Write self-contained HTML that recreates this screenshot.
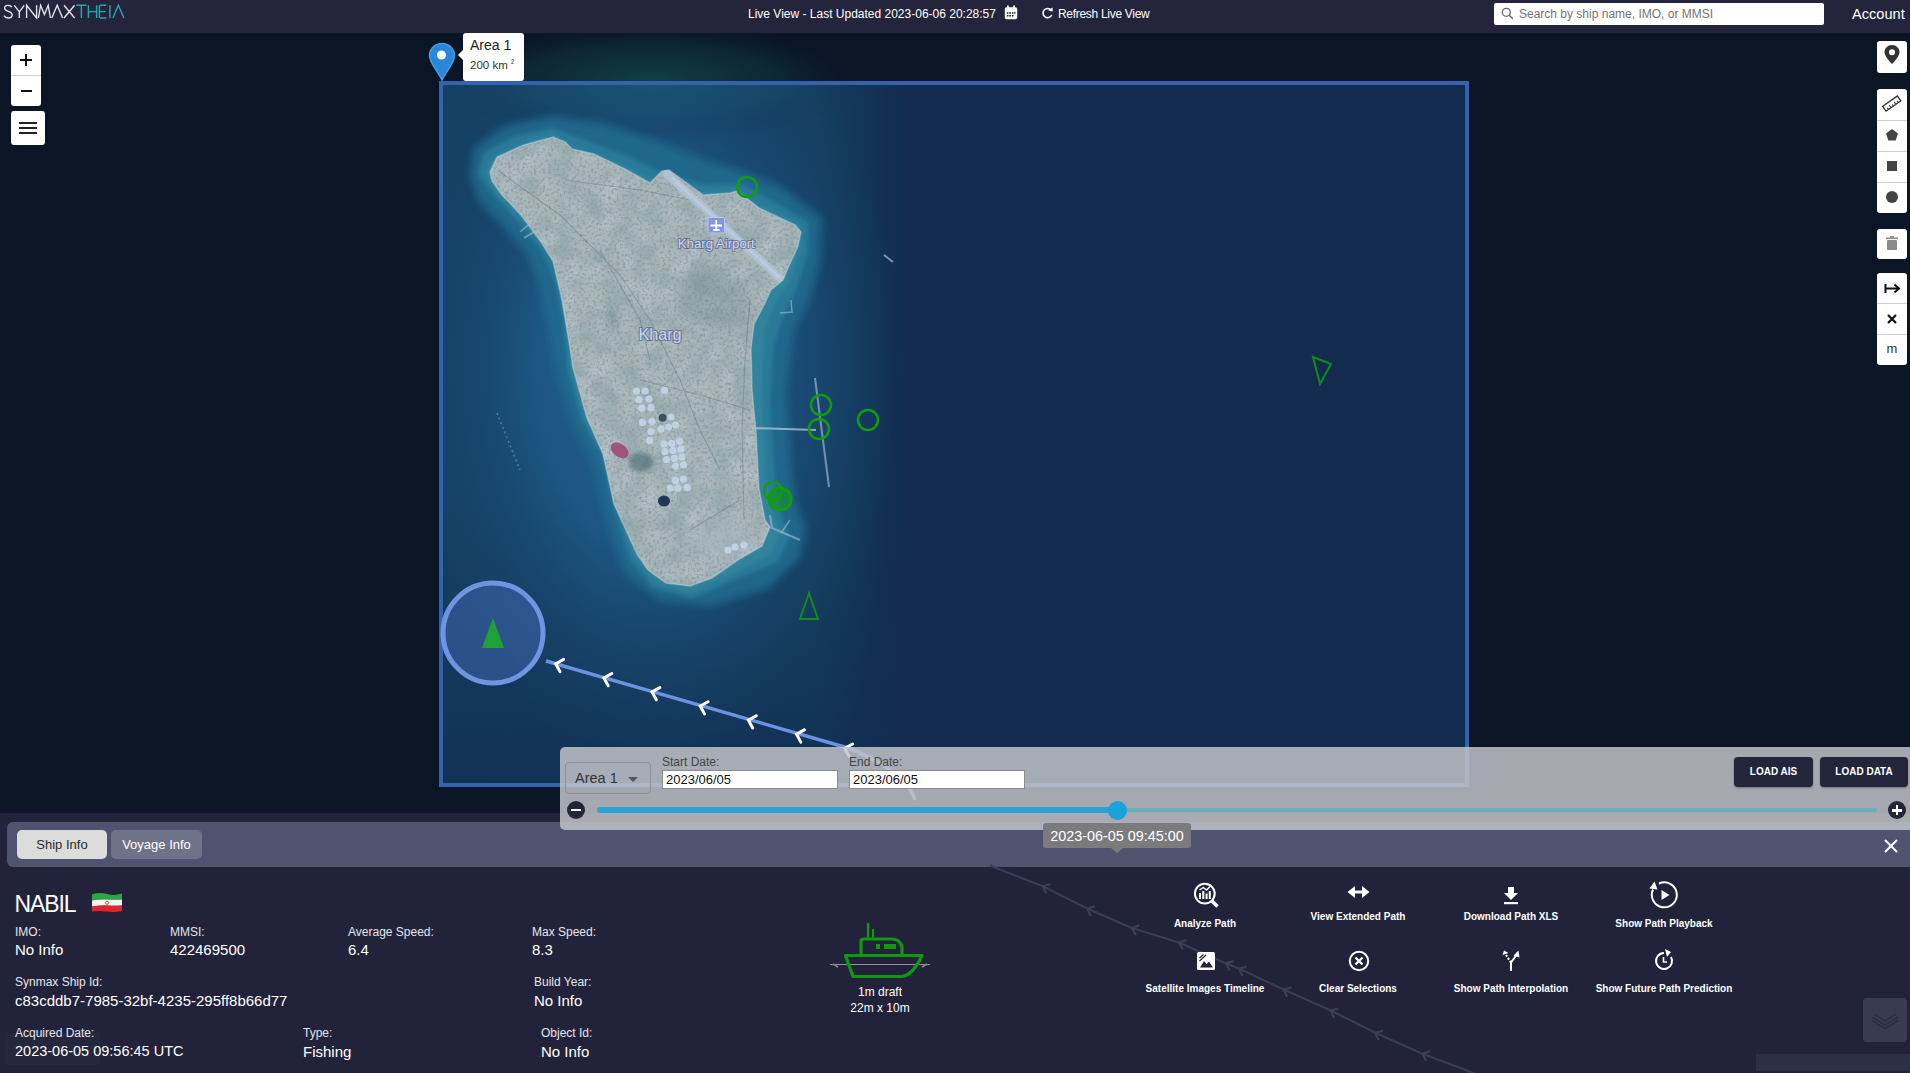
<!DOCTYPE html>
<html><head><meta charset="utf-8">
<style>
*{box-sizing:border-box;margin:0;padding:0}
html,body{width:1910px;height:1073px;overflow:hidden;background:#0a1526;font-family:"Liberation Sans",sans-serif;position:relative}
.abs{position:absolute}
#nav{left:0;top:0;width:1910px;height:33px;background:#24253c}
#map{left:0;top:32px;width:1910px;height:790px;background:#0a1526;overflow:hidden}
.wbtn{position:absolute;background:#fff;border-radius:3px}
#timeline{left:560px;top:747px;width:1350px;height:83px;background:rgba(196,197,201,0.84);border-radius:5px 0 0 5px}
#bottom{left:0;top:813px;width:1910px;height:260px;background:#22233a}
#tabbar{left:7px;top:9px;width:1903px;height:45px;background:#4f5370;border-radius:6px 0 0 6px}
.tab{position:absolute;top:8px;height:29px;border-radius:5px;font-size:13px;text-align:center;line-height:29px}
.lbl{position:absolute;color:#e6e6ea;font-size:12px;white-space:nowrap}
.val{position:absolute;color:#fff;font-size:15px;white-space:nowrap}
.act{position:absolute;color:#fff;font-size:10px;font-weight:bold;white-space:nowrap;text-align:center;width:200px}
</style></head>
<body>
<svg class="abs" style="left:0;top:0" width="1910" height="1073" viewBox="0 0 1910 1073">
 <defs>
  <radialGradient id="glow" gradientUnits="userSpaceOnUse" cx="655" cy="360" r="340">
   <stop offset="0" stop-color="#1c5870"/>
   <stop offset="0.45" stop-color="#184c66"/>
   <stop offset="0.65" stop-color="#113650"/>
   <stop offset="0.82" stop-color="#0c2238"/>
   <stop offset="1" stop-color="#0a1526" stop-opacity="0"/>
  </radialGradient>
  <linearGradient id="topband" x1="0" y1="0" x2="1" y2="0">
   <stop offset="0" stop-color="#14485a" stop-opacity="0"/>
   <stop offset="0.2" stop-color="#14485a" stop-opacity="0.7"/>
   <stop offset="0.75" stop-color="#10384c" stop-opacity="0.5"/>
   <stop offset="1" stop-color="#0a1526" stop-opacity="0"/>
  </linearGradient>
  <filter id="b8" x="-30%" y="-30%" width="160%" height="160%"><feGaussianBlur stdDeviation="8"/></filter>
  <filter id="b4" x="-30%" y="-30%" width="160%" height="160%"><feGaussianBlur stdDeviation="4"/></filter>
  <filter id="b2" x="-30%" y="-30%" width="160%" height="160%"><feGaussianBlur stdDeviation="2"/></filter>
  <filter id="b20" x="-50%" y="-50%" width="200%" height="200%"><feGaussianBlur stdDeviation="20"/></filter>
  <filter id="texd" x="0" y="0" width="100%" height="100%">
   <feTurbulence type="fractalNoise" baseFrequency="0.35" numOctaves="2" seed="7" result="n"/>
   <feColorMatrix in="n" type="matrix" values="0 0 0 0 0.36  0 0 0 0 0.36  0 0 0 0 0.28  0 0 0 -3.0 1.6"/>
  </filter>
  <filter id="texl" x="0" y="0" width="100%" height="100%">
   <feTurbulence type="fractalNoise" baseFrequency="0.05" numOctaves="2" seed="11" result="n"/>
   <feColorMatrix in="n" type="matrix" values="0 0 0 0 0.90  0 0 0 0 0.88  0 0 0 0 0.82  0 0 0 2.2 -1.0"/>
  </filter>
  <filter id="texm" x="0" y="0" width="100%" height="100%">
   <feTurbulence type="fractalNoise" baseFrequency="0.045" numOctaves="3" seed="5" result="n"/>
   <feColorMatrix in="n" type="matrix" values="0 0 0 0 0.38  0 0 0 0 0.42  0 0 0 0 0.30  2.6 0 0 0 -1.05"/>
  </filter>
  <clipPath id="isl"><path d="M490,172 L497,157 L524,145 L553,137 L565,142 L572,149 L594,154 L625,169 L650,183 L662,171 L669,170 L703,195 L730,193 L737,191 L759,208 L795,225 L801,232 L798,246 L788,268 L783,280 L771,290 L764,305 L754,324 L751,348 L752,390 L756,432 L759,489 L765,520 L770,527 L762,546 L738,560 L712,578 L690,586 L666,583 L648,570 L637,554 L614,504 L603,454 L587,418 L573,368 L570,348 L562,300 L553,261 L541,242 L521,215 L502,195 L492,181 Z"/></clipPath>
  <clipPath id="below"><rect x="441" y="83" width="1469" height="990"/></clipPath>
  <clipPath id="sat"><rect x="441" y="32" width="1469" height="1041"/></clipPath>
 </defs>
 <g clip-path="url(#sat)">
  <linearGradient id="tileg" x1="0" y1="0" x2="1" y2="0"><stop offset="0" stop-color="#0e3444" stop-opacity="0.9"/><stop offset="0.8" stop-color="#0e3242" stop-opacity="0.85"/><stop offset="1" stop-color="#0e3242" stop-opacity="0"/></linearGradient>
  <linearGradient id="tilev" x1="0" y1="0" x2="0" y2="1"><stop offset="0" stop-color="#0a1526" stop-opacity="0"/><stop offset="0.6" stop-color="#0a1526" stop-opacity="0"/><stop offset="1" stop-color="#0a1526" stop-opacity="0.7"/></linearGradient>
  <rect x="441" y="83" width="470" height="702" fill="url(#tileg)"/>
  <rect x="441" y="83" width="470" height="702" fill="url(#tilev)"/>
  <radialGradient id="glow2" cx="0.5" cy="0.5" r="0.5">
   <stop offset="0" stop-color="#1c5870"/>
   <stop offset="0.45" stop-color="#184c66"/>
   <stop offset="0.7" stop-color="#12384e" stop-opacity="0.8"/>
   <stop offset="1" stop-color="#0e3242" stop-opacity="0"/>
  </radialGradient>
  <ellipse cx="650" cy="365" rx="250" ry="400" fill="url(#glow2)" clip-path="url(#below)"/>
  <radialGradient id="topg" cx="0.5" cy="0.5" r="0.5"><stop offset="0" stop-color="#155058" stop-opacity="0.7"/><stop offset="0.6" stop-color="#12404c" stop-opacity="0.4"/><stop offset="1" stop-color="#0a1526" stop-opacity="0"/></radialGradient>
  <ellipse cx="650" cy="80" rx="220" ry="60" fill="url(#topg)"/>
  <!-- shallow water halo -->
  <path filter="url(#b4)" fill="#1d6474" opacity="0.9" d="M470,175 L474,148 L505,126 L550,116 L600,122 L655,140 L705,160 L745,172 L780,186 L822,218 L820,262 L810,300 L794,330 L786,390 L790,450 L795,500 L806,528 L800,558 L768,588 L710,606 L658,600 L624,572 L606,520 L592,462 L572,424 L556,372 L548,330 L540,287 L528,255 L504,228 L478,200 Z"/>
  <path filter="url(#b2)" fill="#2a7c84" opacity="0.85" d="M478,174 L484,153 L515,136 L553,128 L585,140 L630,157 L660,172 L702,184 L742,184 L768,198 L808,222 L808,252 L796,290 L784,315 L774,345 L770,400 L775,480 L782,518 L790,536 L778,562 L730,582 L692,598 L652,587 L630,560 L614,508 L602,457 L582,421 L568,372 L563,320 L553,275 L541,250 L518,222 L494,196 Z"/>
  <path filter="url(#b2)" fill="#3a8c8a" opacity="0.55" d="M486,173 L494,157 L522,143 L553,134 L572,147 L626,166 L652,180 L704,192 L736,190 L760,205 L800,225 L800,250 L790,280 L776,300 L764,330 L762,400 L766,480 L774,520 L780,534 L770,555 L728,576 L690,592 L656,582 L634,556 L618,505 L606,455 L585,419 L571,370 L566,320 L556,265 L543,245 L521,218 L498,194 Z"/>
  <!-- island -->
  <g clip-path="url(#isl)">
   <rect x="480" y="130" width="330" height="470" fill="#c6c2aa"/>
   <rect x="480" y="130" width="330" height="470" filter="url(#texl)" opacity="0.35"/>
   <rect x="480" y="130" width="330" height="470" filter="url(#texm)" opacity="0.75"/>
   <rect x="480" y="130" width="330" height="470" filter="url(#texd)"/>
   <ellipse cx="715" cy="300" rx="35" ry="30" fill="#6f7c74" opacity="0.3" filter="url(#b8)"/>
   <ellipse cx="612" cy="320" rx="6" ry="12" fill="#5c6a62" opacity="0.4" filter="url(#b4)"/>
   <ellipse cx="641" cy="462" rx="12" ry="10" fill="#4f5e54" opacity="0.6" filter="url(#b2)"/>
   <ellipse cx="720" cy="540" rx="30" ry="20" fill="#c0c0b4" opacity="0.5" filter="url(#b8)"/>
   <!-- roads -->
   <g stroke="#5a6058" stroke-width="1.1" fill="none" opacity="0.35">
    <path d="M497,170 L560,215 L620,275 L650,320 L680,380 L700,430 L720,470"/>
    <path d="M565,180 L640,190 L690,200 L720,225"/>
    <path d="M600,250 L640,320 L650,360"/>
    <path d="M750,300 L745,360 L742,430 L744,520"/>
    <path d="M640,380 L700,395 L750,410"/>
    <path d="M690,530 L740,500"/>
   </g>
   <!-- runway -->
   <path d="M667,174 L783,281" stroke="#cfd3cf" stroke-width="8" stroke-linecap="round" opacity="0.85"/>
   <path d="M672,178 L780,278" stroke="#e0e2de" stroke-width="3" opacity="0.6"/>
   <!-- ponds -->
   <ellipse cx="619.6" cy="450.4" rx="10" ry="6.5" fill="#b8485e" transform="rotate(35 619.6 450.4)"/>
   <ellipse cx="664" cy="501" rx="6" ry="5.5" fill="#1c2430"/>
   <circle cx="662.6" cy="417.8" r="4" fill="#3c4640"/>
  </g>
  <path d="M490,172 L497,157 L524,145 L553,137 L565,142 L572,149 L594,154 L625,169 L650,183 L662,171 L669,170 L703,195 L730,193 L737,191 L759,208 L795,225 L801,232 L798,246 L788,268 L783,280 L771,290 L764,305 L754,324 L751,348 L752,390 L756,432 L759,489 L765,520 L770,527 L762,546 L738,560 L712,578 L690,586 L666,583 L648,570 L637,554 L614,504 L603,454 L587,418 L573,368 L570,348 L562,300 L553,261 L541,242 L521,215 L502,195 L492,181 Z" fill="none" stroke="#dfe2d8" stroke-width="1.6" opacity="0.45"/>
  <g fill="#e6eaea" opacity="0.85"><circle cx="636.5" cy="391" r="3.6"/><circle cx="645" cy="391" r="3.6"/><circle cx="639" cy="399.6" r="3.6"/><circle cx="649" cy="399" r="3.6"/><circle cx="641.7" cy="408" r="3.6"/><circle cx="651" cy="407.4" r="3.6"/><circle cx="642.4" cy="422.4" r="3.6"/><circle cx="652" cy="421.7" r="3.6"/><circle cx="671" cy="417" r="3.6"/><circle cx="651" cy="431.5" r="3.6"/><circle cx="661" cy="429" r="3.6"/><circle cx="668.5" cy="427" r="3.6"/><circle cx="675.6" cy="425" r="3.6"/><circle cx="649.6" cy="440.6" r="3.6"/><circle cx="664" cy="444" r="3.6"/><circle cx="671.7" cy="443.3" r="3.6"/><circle cx="679.6" cy="441.3" r="3.6"/><circle cx="665" cy="451.7" r="3.6"/><circle cx="673" cy="450.4" r="3.6"/><circle cx="681" cy="449" r="3.6"/><circle cx="666.5" cy="459.6" r="3.6"/><circle cx="674.3" cy="458.3" r="3.6"/><circle cx="682" cy="457" r="3.6"/><circle cx="675.6" cy="466" r="3.6"/><circle cx="683.5" cy="464.8" r="3.6"/><circle cx="675.6" cy="480.4" r="3.6"/><circle cx="683.5" cy="479" r="3.6"/><circle cx="670.4" cy="488" r="3.6"/><circle cx="678" cy="488" r="3.6"/><circle cx="687.4" cy="487.6" r="3.6"/><circle cx="664.6" cy="390.4" r="3.6"/><circle cx="735" cy="547" r="3.6"/><circle cx="744" cy="545" r="3.6"/><circle cx="728" cy="550" r="3.6"/></g>
  <!-- jetties -->
  <path d="M752,428 L816,430" stroke="#c8cccc" stroke-width="2" opacity="0.8"/>
  <path d="M815,378 L829,487" stroke="#aab4ba" stroke-width="2" opacity="0.75"/>
  <path d="M770,515 L772,528 L800,540" stroke="#c0c8d0" stroke-width="2" fill="none" opacity="0.6"/>
  <path d="M781,533 L790,520" stroke="#c0c8d0" stroke-width="1.5" opacity="0.6"/>
  <path d="M497,413 L520,470" stroke="#8aa0b0" stroke-width="1.5" stroke-dasharray="2 3" opacity="0.6"/>
  <path d="M884,255 L893,262" stroke="#c0c8d0" stroke-width="2" opacity="0.7"/>
  <path d="M520,232 L532,222 M524,238 L534,232" stroke="#c8d0d0" stroke-width="1.5" opacity="0.6"/>
  <path d="M780,313 L792,312 L791,300" stroke="#c8d0d0" stroke-width="1.5" fill="none" opacity="0.6"/>
 </g>
 <!-- area overlay -->
 <rect x="441" y="83" width="1026" height="702" fill="#3388ff" fill-opacity="0.19" stroke="#3562ae" stroke-width="4"/>
 <!-- labels -->
 <rect x="708" y="217.5" width="16.5" height="15.5" rx="1.5" fill="#8497dc" stroke="#b9c6ee" stroke-width="1"/>
 <path d="M716.2,220 L716.2,231 M710.5,225.5 L722,225.5 M713,229.8 L719.5,229.8" stroke="#fff" stroke-width="1.8"/>
 <g font-family="Liberation Sans" fill="#c9d3f2" stroke="#44507a" stroke-width="2.2" paint-order="stroke" stroke-opacity="0.55">
  <text x="716.3" y="247.8" font-size="13.2" text-anchor="middle">Kharg Airport</text>
  <text x="660" y="339.5" font-size="16.2" text-anchor="middle">Kharg</text>
 </g>
 <!-- green vessel markers -->
 <g fill="none" stroke="#139a13" stroke-width="2.6">
  <circle cx="747" cy="187" r="10"/>
  <circle cx="821" cy="405" r="10"/>
  <circle cx="819" cy="429" r="10"/>
  <circle cx="868" cy="420" r="10"/>
  <circle cx="773" cy="491" r="9"/>
 </g>
 <circle cx="780" cy="499" r="11" fill="#139a13" fill-opacity="0.55" stroke="#139a13" stroke-width="3.2"/>
 <path d="M809,593 L800,619 L818,619 Z" fill="none" stroke="#138a1c" stroke-width="2"/>
 <path d="M1313,357 L1331,364 L1320,384 Z" fill="none" stroke="#138a1c" stroke-width="2"/>
 <!-- selected vessel -->
 <circle cx="493" cy="633" r="50" fill="#4a6fc0" fill-opacity="0.45" stroke="#6f95e0" stroke-width="5"/>
 <path d="M493,618 L482,648 L504,648 Z" fill="#21a035"/>
 <!-- path -->
 <path d="M546,661 L848,748 Q905,770 915,800" stroke="#6b93e0" stroke-width="3.5" fill="none"/>
 <g stroke="#fff" stroke-width="3" fill="none" stroke-linecap="round">
<path d="M560.0,671.6 L555.7,663.8 L563.6,659.4"/>
<path d="M608.2,685.7 L603.9,677.9 L611.8,673.5"/>
<path d="M656.3,699.8 L652.0,691.9 L659.9,687.6"/>
<path d="M704.5,713.9 L700.2,706.0 L708.1,701.7"/>
<path d="M752.7,728.0 L748.4,720.1 L756.3,715.8"/>
<path d="M800.8,742.1 L796.5,734.2 L804.4,729.9"/>
<path d="M849.0,756.2 L844.7,748.3 L852.6,744.0"/>
 </g>
</svg>



<!-- left zoom controls -->
<div class="wbtn" style="left:11px;top:45px;width:30px;height:61px"></div>
<div class="abs" style="left:11px;top:75px;width:30px;height:1px;background:#cfcfcf"></div>
<div class="abs" style="left:20px;top:59px;width:12px;height:2px;background:#111"></div>
<div class="abs" style="left:25px;top:54px;width:2px;height:12px;background:#111"></div>
<div class="abs" style="left:21px;top:90px;width:11px;height:2px;background:#111"></div>
<div class="wbtn" style="left:11px;top:111px;width:34px;height:34px"></div>
<div class="abs" style="left:19px;top:122px;width:18px;height:2px;background:#222"></div>
<div class="abs" style="left:19px;top:127px;width:18px;height:2px;background:#222"></div>
<div class="abs" style="left:19px;top:132px;width:18px;height:2px;background:#222"></div>
<!-- area marker + tooltip -->
<svg class="abs" style="left:427px;top:42px" width="30" height="40" viewBox="0 0 30 40">
 <path d="M15,1.5 C8,1.5 2.5,7 2.5,13.5 C2.5,21 10,28 15,38 C20,28 27.5,21 27.5,13.5 C27.5,7 22,1.5 15,1.5 Z" fill="#2a87d8" stroke="#4a9ce0" stroke-width="1.5"/>
 <circle cx="14.5" cy="13" r="4.5" fill="#fff"/>
</svg>
<div class="abs" style="left:463px;top:33px;width:61px;height:48px;background:#fff;border-radius:3px"></div>
<div class="abs" style="left:458px;top:49px;width:0;height:0;border-top:6px solid transparent;border-bottom:6px solid transparent;border-right:6px solid #fff"></div>
<div class="abs" style="left:470px;top:37px;font-size:14px;color:#222;white-space:nowrap">Area 1</div>
<div class="abs" style="left:470px;top:58px;font-size:11.5px;color:#333;white-space:nowrap">200 km <span style="font-size:9px;vertical-align:3px">&sup2;</span></div>
<!-- right toolbar -->
<div class="wbtn" style="left:1877px;top:41px;width:30px;height:32px"></div>
<svg class="abs" style="left:1883px;top:44px" width="18" height="22" viewBox="0 0 18 22"><path d="M9,1 C4.6,1 1.5,4.3 1.5,8.3 C1.5,13 9,20 9,20 C9,20 16.5,13 16.5,8.3 C16.5,4.3 13.4,1 9,1 Z" fill="#333"/><circle cx="9" cy="8.3" r="3" fill="#fff"/></svg>
<div class="wbtn" style="left:1877px;top:89px;width:30px;height:124px"></div>
<div class="abs" style="left:1877px;top:120px;width:30px;height:1px;background:#ccc"></div>
<div class="abs" style="left:1877px;top:151px;width:30px;height:1px;background:#ccc"></div>
<div class="abs" style="left:1877px;top:182px;width:30px;height:1px;background:#ccc"></div>
<svg class="abs" style="left:1880px;top:92px" width="24" height="24" viewBox="0 0 24 24"><g transform="rotate(-35 12 12)"><rect x="3" y="8.5" width="18" height="6" fill="none" stroke="#333" stroke-width="1.3"/><path d="M6,14.5 V12.5 M9,14.5 V11.5 M12,14.5 V12.5 M15,14.5 V11.5 M18,14.5 V12.5" stroke="#333" stroke-width="1"/></g></svg>
<svg class="abs" style="left:1885px;top:128px" width="14" height="14" viewBox="0 0 14 14"><path d="M7,1 L13,5.4 L10.7,12.5 L3.3,12.5 L1,5.4 Z" fill="#444"/></svg>
<div class="abs" style="left:1887px;top:161px;width:10px;height:10px;background:#444"></div>
<div class="abs" style="left:1886px;top:191px;width:12px;height:12px;background:#444;border-radius:50%"></div>
<div class="wbtn" style="left:1877px;top:229px;width:30px;height:30px"></div>
<svg class="abs" style="left:1885px;top:235px" width="14" height="16" viewBox="0 0 14 16"><rect x="2" y="5" width="10" height="10" rx="1" fill="#8a8a8a"/><rect x="1" y="2.5" width="12" height="1.6" fill="#8a8a8a"/><rect x="5" y="1" width="4" height="1.6" fill="#8a8a8a"/></svg>
<div class="wbtn" style="left:1877px;top:273px;width:30px;height:92px"></div>
<div class="abs" style="left:1877px;top:303px;width:30px;height:1px;background:#ccc"></div>
<div class="abs" style="left:1877px;top:334px;width:30px;height:1px;background:#ccc"></div>
<svg class="abs" style="left:1884px;top:282px" width="17" height="13" viewBox="0 0 17 13"><path d="M1.5,2 V11 M1.5,6.5 H15 M10.5,2.5 L15,6.5 L10.5,10.5" stroke="#111" stroke-width="2" fill="none"/></svg>
<svg class="abs" style="left:1886px;top:313px" width="12" height="12" viewBox="0 0 12 12"><path d="M2,2 L10,10 M10,2 L2,10" stroke="#111" stroke-width="2.2"/></svg>
<div class="abs" style="left:1877px;top:341px;width:30px;text-align:center;font-size:13px;color:#333">m</div>

<div id="nav" class="abs">
  <svg class="abs" style="left:0;top:0" width="130" height="24" viewBox="0 0 130 24">
   <g fill="none" stroke="#e6e6ee" stroke-width="1.35" stroke-linejoin="miter">
    <path d="M11.8,7.2 C11,5.8 9.6,5.3 8,5.3 C6,5.3 4.6,6.4 4.6,8.2 C4.6,12 12.2,10.6 12.2,14.8 C12.2,16.8 10.4,18 8.2,18 C6.2,18 4.8,17 4,15.6"/>
    <path d="M14.3,5.3 L19.3,11.8 L24.2,5.3 M19.3,11.8 V18"/>
    <path d="M26.6,18 V5.3 L36.6,18 V5.3"/>
    <path d="M38.4,18 L40.6,5.3 L44.4,14.5 L48.2,5.3 L50.4,18"/>
    <path d="M51.8,18 L57.2,5.3 L62.6,18"/>
    <path d="M64,5.3 L74.6,18 M74.6,5.3 L64,18"/>
   </g>
   <g fill="none" stroke="#24a6ad" stroke-width="1.45">
    <path d="M76.2,5.3 H86.5 M81.35,5.3 V18"/>
    <path d="M88.4,5.3 V18 M96.6,5.3 V18 M88.4,11.6 H96.6"/>
    <path d="M106.3,5.3 H100.1 M99.4,5.3 V18 M100.1,18 H106.3 M100.1,11.6 H105.5"/>
    <path d="M109.9,5.3 V18"/>
    <path d="M112.9,18 L118.4,5.3 L123.9,18"/>
   </g>
  </svg>
  <div class="abs" style="left:748px;top:7px;font-size:12px;color:#fff;white-space:nowrap">Live View - Last Updated 2023-06-06 20:28:57</div>
  <div class="abs" style="left:1041px;top:7px;font-size:12px;color:#fff;white-space:nowrap;padding-left:17px;letter-spacing:-0.3px">Refresh Live View</div>
  <div class="abs" style="left:1494px;top:3px;width:330px;height:22px;background:#fff;border-radius:2px"></div>
  <div class="abs" style="left:1519px;top:7px;font-size:12px;color:#757575;white-space:nowrap">Search by ship name, IMO, or MMSI</div>
  <div class="abs" style="left:1852px;top:6px;font-size:14.6px;color:#fff;white-space:nowrap">Account</div>
  <svg class="abs" style="left:1004px;top:5px" width="14" height="15" viewBox="0 0 14 15"><rect x="0.8" y="2.2" width="12.4" height="12" rx="1.8" fill="#fff"/><rect x="3" y="0.5" width="1.8" height="3" fill="#fff"/><rect x="9.2" y="0.5" width="1.8" height="3" fill="#fff"/><g fill="#24253c"><rect x="2.8" y="7.2" width="1.7" height="1.5"/><rect x="5.3" y="7.2" width="1.7" height="1.5"/><rect x="7.8" y="7.2" width="1.7" height="1.5"/><rect x="10.2" y="7.2" width="1.4" height="1.5"/><rect x="2.8" y="10" width="1.7" height="1.5"/><rect x="5.3" y="10" width="1.7" height="1.5"/><rect x="7.8" y="10" width="1.7" height="1.5"/></g></svg>
  <svg class="abs" style="left:1041px;top:7px" width="13" height="12" viewBox="0 0 13 12"><path d="M10.2,3.2 A4.6,4.6 0 1 0 10.8,8" fill="none" stroke="#fff" stroke-width="1.6"/><path d="M7.2,3.6 L11.6,0.6 L11.6,4.6 Z" fill="#fff"/></svg>
  <svg class="abs" style="left:1501px;top:7px" width="13" height="13" viewBox="0 0 13 13"><circle cx="5.3" cy="5.3" r="4" fill="none" stroke="#666" stroke-width="1.3"/><path d="M8.2,8.2 L11.8,11.8" stroke="#666" stroke-width="1.5"/></svg>
  
</div>

<div id="bottom" class="abs">
    <div class="abs" style="left:5px;top:220px;width:95px;height:32px;background:#26273e"></div>
  <div id="tabbar" class="abs">
    <div class="tab" style="left:10px;width:90px;background:#dcdcdc;color:#2a2a2a">Ship Info</div>
    <div class="tab" style="left:104px;width:91px;background:#6f7388;color:#fff">Voyage Info</div>
  </div>
  <div class="abs" style="left:1883px;top:25px;width:16px;height:16px"><svg width="16" height="16" viewBox="0 0 16 16"><path d="M2,2 L14,14 M14,2 L2,14" stroke="#fff" stroke-width="2"/></svg></div>
  <!-- faint map path under panel -->
  <svg class="abs" style="left:0;top:0" width="1910" height="260" viewBox="0 813 1910 260">
   <path d="M990.0,865.0 L995.7,867.9 L1042.8,886.2 L1087.3,908.4 L1131.8,928.0 L1179.0,942.5 L1226.0,963.4 L1239.0,968.6 L1283.7,989.6 L1330.8,1010.5 L1375.3,1032.8 L1422.4,1053.7 L1464.3,1069.4 L1480.0,1076.0" stroke="#3a3d59" stroke-width="2.2" fill="none"/>
   <path d="M1042.8,886.2 L1046.3,893.4 M1042.8,886.2 L1050.5,884.0 M1087.3,908.4 L1090.7,915.7 M1087.3,908.4 L1095.0,906.4 M1131.8,928.0 L1135.8,935.0 M1131.8,928.0 L1139.3,925.3 M1179.0,942.5 L1182.9,949.5 M1179.0,942.5 L1186.5,939.8 M1226.0,963.4 L1229.6,970.6 M1226.0,963.4 L1233.7,961.1 M1239.0,968.6 L1242.5,975.8 M1239.0,968.6 L1246.7,966.5 M1283.7,989.6 L1287.1,996.8 M1283.7,989.6 L1291.4,987.5 M1330.8,1010.5 L1334.1,1017.8 M1330.8,1010.5 L1338.5,1008.5 M1375.3,1032.8 L1378.6,1040.1 M1375.3,1032.8 L1383.0,1030.8 M1422.4,1053.7 L1426.1,1060.8 M1422.4,1053.7 L1430.0,1051.3" stroke="#3c3f5c" stroke-width="2.2" fill="none"/>
  </svg>
  <div class="abs" style="left:14.5px;top:78px;font-size:23px;letter-spacing:-1.1px;color:#fff;white-space:nowrap">NABIL</div>
  <svg class="abs" style="left:91px;top:79px" width="32" height="21" viewBox="0 0 32 21">
   <path d="M1,2.5 Q8,0 16,2 T31,1.5 V7.5 Q23,8 16,7.5 T1,8.5 Z" fill="#2aa842"/>
   <path d="M1,8.5 Q8,7 16,7.5 T31,7.5 V13.5 Q23,14 16,13.5 T1,14.5 Z" fill="#f4f4f4"/>
   <path d="M1,14.5 Q8,13 16,13.5 T31,13.5 V19 Q23,20.5 16,19.5 T1,19.5 Z" fill="#e0252d"/>
   <circle cx="16" cy="10.8" r="1.6" fill="none" stroke="#d33" stroke-width="0.8"/>
  </svg>
  <div class="lbl" style="left:15px;top:112px">IMO:</div>
  <div class="val" style="left:15px;top:128px">No Info</div>
  <div class="lbl" style="left:170px;top:112px">MMSI:</div>
  <div class="val" style="left:170px;top:128px">422469500</div>
  <div class="lbl" style="left:348px;top:112px">Average Speed:</div>
  <div class="val" style="left:348px;top:128px">6.4</div>
  <div class="lbl" style="left:532px;top:112px">Max Speed:</div>
  <div class="val" style="left:532px;top:128px">8.3</div>
  <div class="lbl" style="left:15px;top:162px">Synmax Ship Id:</div>
  <div class="val" style="left:15px;top:179px">c83cddb7-7985-32bf-4235-295ff8b66d77</div>
  <div class="lbl" style="left:534px;top:162px">Build Year:</div>
  <div class="val" style="left:534px;top:179px">No Info</div>
  <div class="lbl" style="left:15px;top:213px">Acquired Date:</div>
  <div class="val" style="left:15px;top:230px;font-size:14.5px">2023-06-05 09:56:45 UTC</div>
  <div class="lbl" style="left:303px;top:213px">Type:</div>
  <div class="val" style="left:303px;top:230px">Fishing</div>
  <div class="lbl" style="left:541px;top:213px">Object Id:</div>
  <div class="val" style="left:541px;top:230px">No Info</div>
  <!-- boat -->
  <svg class="abs" style="left:828px;top:107px" width="104" height="62" viewBox="828 920 104 62">
   <path d="M830,964.5 H930" stroke="#9a8f9a" stroke-width="1"/>
   <path d="M833,964 l5,3 M927,964 l-5,3" stroke="#888" stroke-width="1.5"/>
   <path d="M845.5,955.5 H922 Q913,975 902,976.5 H853 Z" fill="none" stroke="#119811" stroke-width="3.2" stroke-linejoin="round"/>
   <path d="M861,955 V941 Q861,939 864,939 H892 Q900,939 902,947 V955" fill="none" stroke="#119811" stroke-width="3.2"/>
   <path d="M868,939 V923 M873,939 V929" stroke="#119811" stroke-width="2.2"/>
   <rect x="876" y="944" width="4" height="5" fill="#119811"/>
   <rect x="884" y="944" width="12" height="5" fill="#119811"/>
  </svg>
  <div class="abs" style="left:780px;top:172px;width:200px;text-align:center;font-size:12px;color:#fff">1m draft</div>
  <div class="abs" style="left:780px;top:188px;width:200px;text-align:center;font-size:12px;color:#fff">22m x 10m</div>
  <!-- actions -->
  <div class="act" style="left:1105px;top:105px">Analyze Path</div>
  <div class="act" style="left:1105px;top:170px">Satellite Images Timeline</div>
  <div class="act" style="left:1258px;top:98px">View Extended Path</div>
  <div class="act" style="left:1258px;top:170px">Clear Selections</div>
  <div class="act" style="left:1411px;top:98px">Download Path XLS</div>
  <div class="act" style="left:1411px;top:170px">Show Path Interpolation</div>
  <div class="act" style="left:1564px;top:105px">Show Path Playback</div>
  <div class="act" style="left:1564px;top:170px">Show Future Path Prediction</div>
  <svg class="abs" style="left:0;top:0" width="1910" height="260" viewBox="0 813 1910 260">
   <!-- analyze path -->
   <circle cx="1204.8" cy="893.6" r="9.9" fill="none" stroke="#fff" stroke-width="2"/>
   <path d="M1212,901 L1217.5,906.5" stroke="#fff" stroke-width="3.6"/>
   <path d="M1200,899 V893 M1203.3,899 V891 M1206.6,899 V893.5 M1209.8,899 V891" stroke="#fff" stroke-width="2"/>
   <path d="M1199.5,890 L1203.3,887.5 L1206.6,890 L1210,886.5" stroke="#fff" stroke-width="1.4" fill="none"/>
   <!-- satellite images -->
   <rect x="1197" y="952" width="18" height="18" rx="1.5" fill="#fff"/>
   <path d="M1200,967.5 L1204,961 L1206.5,964 L1209,961.5 L1213,967.5 Z" fill="#22233a"/>
   <path d="M1199.5,958 L1203.5,954.5 M1199.5,961 L1206,955" stroke="#22233a" stroke-width="1.2" fill="none"/>
   <!-- view extended path -->
   <path d="M1352,892 H1365" stroke="#fff" stroke-width="3"/>
   <path d="M1355,886 L1347.5,892 L1355,898 Z M1362,886 L1369.5,892 L1362,898 Z" fill="#fff"/>
   <!-- download -->
   <path d="M1508,887 H1514 V893 H1518 L1511,900 L1504,893 H1508 Z" fill="#fff"/>
   <rect x="1504" y="902" width="14" height="2.2" fill="#fff"/>
   <!-- playback -->
   <path d="M1659,883.5 A12.5,12.5 0 1 1 1653,889.5" fill="none" stroke="#fff" stroke-width="2"/>
   <path d="M1649.5,888.5 L1654.5,881.5 L1657.5,889.5 Z" fill="#fff"/>
   <path d="M1661.5,890 L1669.5,895 L1661.5,900 Z" fill="#fff"/>
   <!-- clear selections -->
   <circle cx="1359" cy="961" r="9.2" fill="none" stroke="#fff" stroke-width="2"/>
   <path d="M1355.5,957.5 L1362.5,964.5 M1362.5,957.5 L1355.5,964.5" stroke="#fff" stroke-width="2.2"/>
   <!-- interpolation -->
   <path d="M1511,971 V962.5 L1516.5,955" stroke="#fff" stroke-width="2" fill="none"/>
   <path d="M1511,962.5 L1506,955" stroke="#fff" stroke-width="2" stroke-dasharray="2 1.5" fill="none"/>
   <path d="M1513.5,955.5 L1518.5,950.5 L1519.5,957.5 Z" fill="#fff"/>
   <path d="M1502.5,955 L1504,950.5 L1508.5,953 Z" fill="#fff"/>
   <!-- future prediction -->
   <path d="M1671,957 A8,8 0 1 1 1664,953" fill="none" stroke="#fff" stroke-width="2"/>
   <path d="M1665,949 L1671,952 L1667,957 Z" fill="#fff"/>
   <path d="M1663.5,957 V962 H1667" stroke="#fff" stroke-width="1.6" fill="none"/>
  </svg>
  <!-- faint layer button & attribution -->
  <div class="abs" style="left:1863px;top:185px;width:44px;height:44px;background:#393b51;border-radius:4px"></div>
  <svg class="abs" style="left:1870px;top:198px" width="30" height="20" viewBox="0 0 30 20"><path d="M2,6 L15,14 L28,6 M2,9.5 L15,17.5 L28,9.5 M4,3 L15,10 L26,3" stroke="#2c2e42" stroke-width="1.5" fill="none"/></svg>
  <div class="abs" style="left:1756px;top:241px;width:154px;height:17px;background:#2d2f46"></div>

</div>

<div id="timeline" class="abs"></div>
<div class="abs" style="left:565px;top:762px;width:86px;height:32px;border:1px solid #8e9196;border-radius:4px"></div>
<div class="abs" style="left:575px;top:770px;font-size:14.5px;color:#333;white-space:nowrap">Area 1</div>
<div class="abs" style="left:628px;top:777px;width:0;height:0;border-left:5px solid transparent;border-right:5px solid transparent;border-top:5px solid #555"></div>
<div class="abs" style="left:662px;top:755px;font-size:12px;color:#444;white-space:nowrap">Start Date:</div>
<div class="abs" style="left:662px;top:770px;width:176px;height:19px;background:#fff;border:1px solid #8a8a8a"></div>
<div class="abs" style="left:666px;top:772px;font-size:13px;color:#111;white-space:nowrap">2023/06/05</div>
<div class="abs" style="left:849px;top:755px;font-size:12px;color:#444;white-space:nowrap">End Date:</div>
<div class="abs" style="left:849px;top:770px;width:176px;height:19px;background:#fff;border:1px solid #8a8a8a"></div>
<div class="abs" style="left:853px;top:772px;font-size:13px;color:#111;white-space:nowrap">2023/06/05</div>
<div class="abs" style="left:1734px;top:757px;width:79px;height:30px;background:#23253b;border-radius:4px;box-shadow:0 1px 2px rgba(0,0,0,0.3)"></div>
<div class="abs" style="left:1734px;top:766px;width:79px;text-align:center;font-size:10px;font-weight:bold;color:#fff">LOAD AIS</div>
<div class="abs" style="left:1820px;top:757px;width:88px;height:30px;background:#23253b;border-radius:4px;box-shadow:0 1px 2px rgba(0,0,0,0.3)"></div>
<div class="abs" style="left:1820px;top:766px;width:88px;text-align:center;font-size:10px;font-weight:bold;color:#fff">LOAD DATA</div>
<div class="abs" style="left:567px;top:801px;width:18px;height:18px;background:#23253b;border-radius:50%"></div>
<div class="abs" style="left:571px;top:809px;width:10px;height:2px;background:#fff"></div>
<div class="abs" style="left:1888px;top:801px;width:18px;height:18px;background:#23253b;border-radius:50%"></div>
<div class="abs" style="left:1892px;top:809px;width:10px;height:2.5px;background:#fff"></div>
<div class="abs" style="left:1895.7px;top:805px;width:2.5px;height:10px;background:#fff"></div>
<div class="abs" style="left:597px;top:807px;width:520px;height:6px;background:#2aa3d4;border-radius:3px"></div>
<div class="abs" style="left:1117px;top:808px;width:760px;height:4px;background:#6aaeba;border-radius:2px"></div>
<div class="abs" style="left:1108px;top:801px;width:19px;height:19px;background:#1aa3da;border-radius:50%"></div>
<div class="abs" style="left:1043px;top:823px;width:148px;height:25px;background:#7b7b7e;border-radius:3px"></div>
<div class="abs" style="left:1111px;top:848px;width:0;height:0;border-left:6px solid transparent;border-right:6px solid transparent;border-top:5px solid #7b7b7e"></div>
<div class="abs" style="left:1043px;top:827.5px;width:148px;text-align:center;font-size:14.4px;color:#fff;white-space:nowrap">2023-06-05 09:45:00</div>

</body></html>
